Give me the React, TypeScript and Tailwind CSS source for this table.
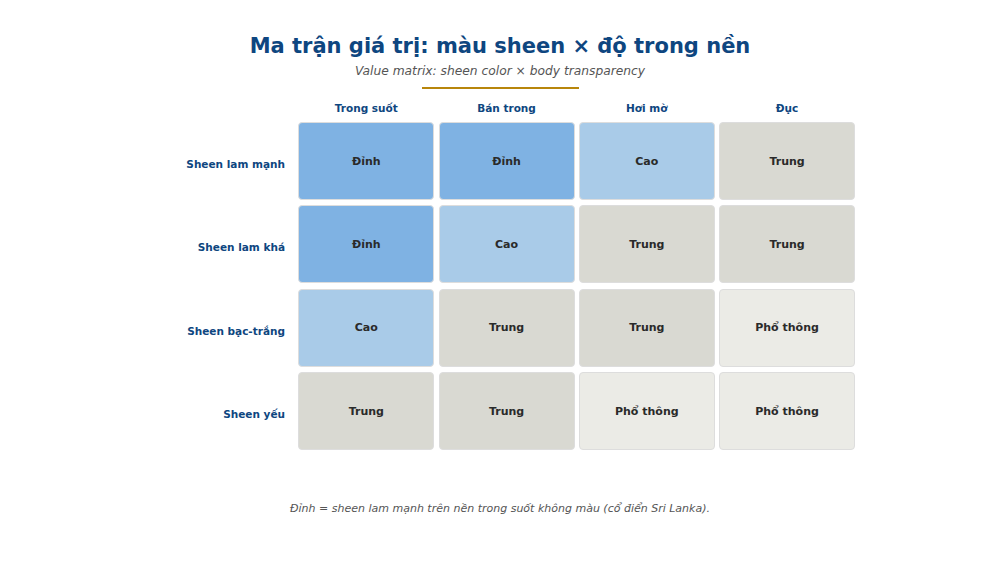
const cols = ['Trong suốt', 'Bán trong', 'Hơi mờ', 'Đục']

type Level = 'Đỉnh' | 'Cao' | 'Trung' | 'Phổ thông'

const rows: { label: string; cells: Level[] }[] = [
  { label: 'Sheen lam mạnh', cells: ['Đỉnh', 'Đỉnh', 'Cao', 'Trung'] },
  { label: 'Sheen lam khá', cells: ['Đỉnh', 'Cao', 'Trung', 'Trung'] },
  { label: 'Sheen bạc-trắng', cells: ['Cao', 'Trung', 'Trung', 'Phổ thông'] },
  { label: 'Sheen yếu', cells: ['Trung', 'Trung', 'Phổ thông', 'Phổ thông'] },
]

const cellBg: Record<Level, string> = {
  'Đỉnh': 'bg-[#7fb2e3]',
  Cao: 'bg-[#a9cbe8]',
  Trung: 'bg-[#d9d9d2]',
  'Phổ thông': 'bg-[#ebebe6]',
}

export default function App() {
  return (
    <main className="min-h-[561px] w-[1000px] bg-white font-['DejaVu_Sans',sans-serif]">
      <div className="flex flex-col items-center pt-[32px]">
        <h1 className="text-[21px] font-bold leading-[28px] text-[#0e4680]">
          Ma trận giá trị: màu sheen × độ trong nền
        </h1>
        <p className="mt-[2px] text-[12.25px] italic leading-[18px] text-[#555555]">
          Value matrix: sheen color × body transparency
        </p>
        <div className="mt-[7px] h-[2px] w-[157px] bg-[#b8860b]" />
      </div>

      <div className="ml-[155px] mt-[12px] w-[700px]">
        <div className="grid grid-cols-[139px_1fr_1fr_1fr_1fr] gap-x-[4.33px]">
          <div />
          {cols.map((c) => (
            <div key={c} className="text-center text-[10.5px] font-bold leading-[14px] text-[#0e4680]">
              {c}
            </div>
          ))}
        </div>

        <div className="mt-[7px] grid grid-cols-[139px_1fr_1fr_1fr_1fr] gap-x-[4.33px] gap-y-[5.33px]">
          {rows.map((r) => (
            <div key={r.label} className="contents">
              <div className="flex items-center justify-end pr-[9px] pt-[8px] text-[10.5px] font-bold text-[#0e4680]">
                {r.label}
              </div>
              {r.cells.map((v, i) => (
                <div
                  key={i}
                  className={`flex h-[78px] items-center justify-center rounded-[4px] border border-[#dddddd] pt-[2px] text-[11px] font-bold text-[#2a2a2a] ${cellBg[v]}`}
                >
                  {v}
                </div>
              ))}
            </div>
          ))}
        </div>
      </div>

      <p className="mt-[52px] text-center text-[11px] italic leading-[14px] text-[#555555]">
        Đỉnh = sheen lam mạnh trên nền trong suốt không màu (cổ điển Sri Lanka).
      </p>
    </main>
  )
}
